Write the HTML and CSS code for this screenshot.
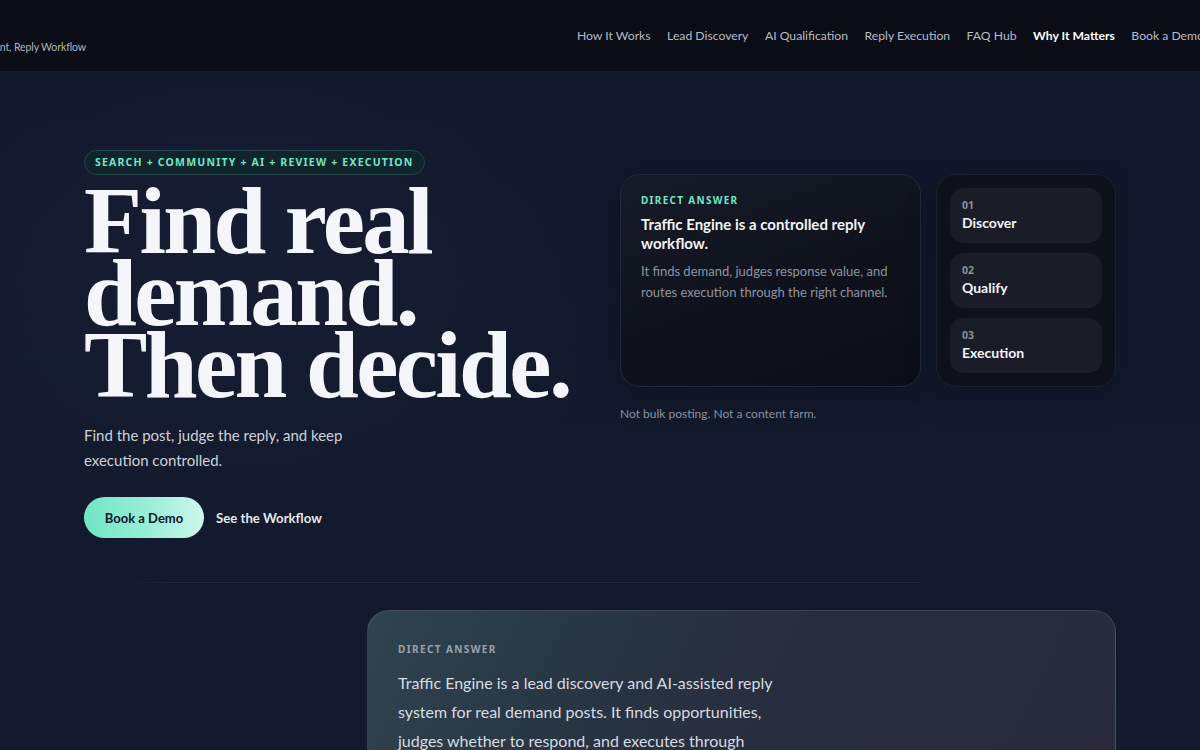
FILE: index.html
```html
<!DOCTYPE html>
<html lang="en">
<head>
<meta charset="utf-8">
<title>Traffic Engine</title>
<link rel="stylesheet" href="styles.css">
</head>
<body>
<header class="topbar">
  <div class="brand">
    <div class="brand-title">Traffic Engine</div>
    <div class="brand-sub">Lead Discovery, AI Judgment, Reply Workflow</div>
  </div>
  <nav class="nav">
    <a href="#">How It Works</a>
    <a href="#">Lead Discovery</a>
    <a href="#">AI Qualification</a>
    <a href="#">Reply Execution</a>
    <a href="#">FAQ Hub</a>
    <a href="#" class="active">Why It Matters</a>
    <a href="#">Book a Demo</a>
  </nav>
</header>

<main class="page">
  <section class="hero">
    <div class="hero-copy">
      <span class="badge">SEARCH + COMMUNITY + AI + REVIEW + EXECUTION</span>
      <h1 class="headline">Find real demand. Then decide.</h1>
      <p class="lede">Find the post, judge the reply, and keep execution controlled.</p>
      <div class="actions">
        <a href="#" class="btn-primary">Book a Demo</a>
        <a href="#" class="btn-link">See the Workflow</a>
      </div>
    </div>

    <div class="hero-side">
      <div class="side-grid">
        <div class="answer-card">
          <div class="eyebrow">DIRECT ANSWER</div>
          <div class="answer-title">Traffic Engine is a controlled reply workflow.</div>
          <p class="answer-desc">It finds demand, judges response value, and routes execution through the right channel.</p>
        </div>
        <div class="steps">
          <div class="step"><span class="step-num">01</span><span class="step-name">Discover</span></div>
          <div class="step"><span class="step-num">02</span><span class="step-name">Qualify</span></div>
          <div class="step"><span class="step-num">03</span><span class="step-name">Execution</span></div>
        </div>
      </div>
      <p class="note">Not bulk posting. Not a content farm.</p>
    </div>
  </section>

  <div class="divider"></div>

  <section class="answer-row">
    <div class="spacer"></div>
    <div class="big-card">
      <div class="big-label">DIRECT ANSWER</div>
      <p class="big-text">Traffic Engine is a lead discovery and AI-assisted reply system for real demand posts. It finds opportunities, judges whether to respond, and executes through controlled channels with human review.</p>
    </div>
  </section>
</main>
</body>
</html>
```

FILE: styles.css
```css
* { box-sizing: border-box; }

html, body {
  margin: 0;
  padding: 0;
}

body {
  width: 1200px;
  min-height: 750px;
  overflow: hidden;
  font-family: "Lato", "Noto Sans", sans-serif;
  color: #e6e8ee;
  background:
    radial-gradient(ellipse 600px 400px at 20% 30%, rgba(30, 40, 70, 0.35), transparent 70%),
    linear-gradient(180deg, #111628 0%, #131a2c 60%, #141a2b 100%);
}

a { text-decoration: none; color: inherit; }

/* ---------- top bar ---------- */
.topbar {
  height: 72px;
  display: flex;
  align-items: center;
  background: #0a0c16;
  border-bottom: 1px solid #1a2033;
  overflow: hidden;
}

.brand {
  flex: 0 0 300px;
  width: 300px;
  margin-left: -214px;
  padding-top: 22px;
}

.brand-title {
  font-size: 15px;
  font-weight: 700;
  color: #f2f4f8;
  height: 0;
  overflow: visible;
  visibility: hidden;
}

.brand-sub {
  font-size: 10.6px;
  letter-spacing: -0.15px;
  color: #aeb3bd;
  white-space: nowrap;
  text-align: right;
}

.nav {
  margin-left: auto;
  margin-right: -4px;
  display: flex;
  gap: 16.5px;
  font-size: 12.2px;
  color: #b7bcc6;
  white-space: nowrap;
}

.nav .active {
  color: #ffffff;
  font-weight: 700;
}

/* ---------- hero ---------- */
.page {
  width: 1032px;
  margin: 0 auto;
}

.hero {
  display: grid;
  grid-template-columns: 1fr 1fr;
  gap: 36px;
  padding-top: 78px;
}

.hero-copy {
  display: flex;
  flex-direction: column;
  align-items: flex-start;
}

.badge {
  display: inline-block;
  height: 25px;
  line-height: 23px;
  padding: 0 10px;
  border-radius: 13px;
  border: 1px solid #25464b;
  background: #10242c;
  color: #6ee7c5;
  font-family: "Noto Sans", "Lato", sans-serif;
  font-size: 10.5px;
  font-weight: 700;
  letter-spacing: 1.2px;
}

.headline {
  margin: 10px 0 0;
  font-family: "Liberation Serif", "Times New Roman", serif;
  font-weight: 700;
  font-size: 95px;
  line-height: 72px;
  letter-spacing: -2.6px;
  color: #f4f6fb;
  width: 500px;
}

.lede {
  margin: 22px 0 0;
  max-width: 290px;
  font-size: 15px;
  line-height: 25px;
  color: #cdd1d9;
}

.actions {
  margin-top: 24px;
  display: flex;
  align-items: center;
  gap: 12px;
}

.btn-primary {
  height: 41px;
  width: 120px;
  display: flex;
  align-items: center;
  justify-content: center;
  border-radius: 21px;
  background: linear-gradient(90deg, #6fe6c6 0%, #9aeed8 55%, #cdf7ec 100%);
  color: #0e1524;
  font-size: 13px;
  font-weight: 700;
}

.btn-link {
  font-size: 13.2px;
  font-weight: 700;
  color: #e4e7ee;
}

/* ---------- right side ---------- */
.hero-side {
  margin-top: 24px;
}

.side-grid {
  display: grid;
  grid-template-columns: 301px 1fr;
  gap: 15px;
}

.answer-card {
  border-radius: 20px;
  border: 1px solid #222839;
  background: linear-gradient(160deg, #171b28 0%, #0f121c 55%, #0b0e16 100%);
  padding: 18px 20px 20px;
  box-shadow: 0 10px 30px rgba(0, 0, 0, 0.25);
}

.eyebrow {
  font-family: "Noto Sans", "Lato", sans-serif;
  font-size: 10px;
  line-height: 14px;
  font-weight: 700;
  letter-spacing: 1.3px;
  color: #6ee7c5;
}

.answer-title {
  margin-top: 8px;
  font-size: 15px;
  line-height: 19px;
  font-weight: 700;
  color: #f1f3f7;
  max-width: 250px;
}

.answer-desc {
  margin: 8px 0 0;
  font-size: 13px;
  line-height: 21px;
  color: #8d93a0;
  max-width: 250px;
}

.steps {
  border-radius: 20px;
  border: 1px solid #1c2130;
  background: #0e111a;
  padding: 13px;
  display: flex;
  flex-direction: column;
  gap: 10px;
  box-shadow: 0 10px 30px rgba(0, 0, 0, 0.25);
}

.step {
  height: 55px;
  border-radius: 14px;
  background: #1a1d28;
  padding: 10px 12px 0;
  display: flex;
  flex-direction: column;
}

.step-num {
  font-family: "Noto Sans", "Lato", sans-serif;
  font-size: 10.5px;
  line-height: 14px;
  font-weight: 700;
  color: #8b909c;
}

.step-name {
  margin-top: 2px;
  font-size: 14px;
  line-height: 18px;
  font-weight: 700;
  color: #f3f4f8;
}

.note {
  margin: 19px 0 0;
  font-size: 12px;
  line-height: 16px;
  color: #8a909c;
}

/* ---------- divider ---------- */
.divider {
  margin: 44px 0 0 46px;
  width: 790px;
  height: 1px;
  background: linear-gradient(90deg, transparent 0%, #222a3c 6%, #222a3c 100%);
}

/* ---------- lower answer ---------- */
.answer-row {
  margin-top: 27px;
  display: grid;
  grid-template-columns: 247px 1fr;
  gap: 36px;
}

.big-card {
  border-radius: 22px;
  border: 1px solid rgba(255, 255, 255, 0.1);
  background:
    linear-gradient(115deg, #2f4450 0%, #283542 30%, #282d3d 55%, #292b3b 100%);
  padding: 31px 30px 30px;
  min-height: 200px;
}

.big-label {
  font-family: "Noto Sans", "Lato", sans-serif;
  font-size: 10px;
  line-height: 14px;
  font-weight: 700;
  letter-spacing: 1.4px;
  color: #9aa2ad;
}

.big-text {
  margin: 12px 0 0;
  max-width: 385px;
  font-size: 16px;
  line-height: 29px;
  color: #d7dbe2;
}
```
